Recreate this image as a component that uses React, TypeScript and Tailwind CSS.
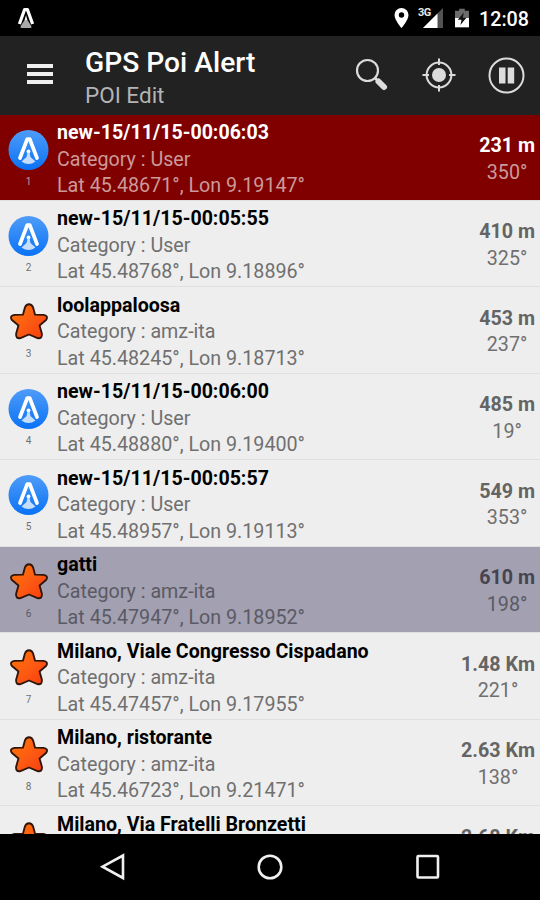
import React from "react";

type Poi = {
  name: string;
  category: string;
  lat?: string;
  lon?: string;
  distance: string;
  bearing?: string;
  state?: "nearest" | "selected";
};

const pois: Poi[] = [
  { name: "new-15/11/15-00:06:03", category: "User", lat: "45.48671", lon: "9.19147", distance: "231 m", bearing: "350°", state: "nearest" },
  { name: "new-15/11/15-00:05:55", category: "User", lat: "45.48768", lon: "9.18896", distance: "410 m", bearing: "325°" },
  { name: "loolappaloosa", category: "amz-ita", lat: "45.48245", lon: "9.18713", distance: "453 m", bearing: "237°" },
  { name: "new-15/11/15-00:06:00", category: "User", lat: "45.48880", lon: "9.19400", distance: "485 m", bearing: "19°" },
  { name: "new-15/11/15-00:05:57", category: "User", lat: "45.48957", lon: "9.19113", distance: "549 m", bearing: "353°" },
  { name: "gatti", category: "amz-ita", lat: "45.47947", lon: "9.18952", distance: "610 m", bearing: "198°", state: "selected" },
  { name: "Milano, Viale Congresso Cispadano", category: "amz-ita", lat: "45.47457", lon: "9.17955", distance: "1.48 Km", bearing: "221°" },
  { name: "Milano, ristorante", category: "amz-ita", lat: "45.46723", lon: "9.21471", distance: "2.63 Km", bearing: "138°" },
  { name: "Milano, Via Fratelli Bronzetti", category: "amz-ita", distance: "2.68 Km" },
];

export default function App() {
  return (
    <div className="flex h-[900px] w-[540px] flex-col overflow-hidden bg-black font-['Roboto','Noto_Sans',sans-serif]">
      <StatusBar />
      <Toolbar />
      <main className="min-h-0 flex-1 overflow-hidden bg-[#eeeeee]">
        {pois.map((poi, index) => (
          <PoiRow key={index} poi={poi} position={index + 1} />
        ))}
      </main>
      <NavigationBar />
    </div>
  );
}

function StatusBar() {
  return (
    <div className="flex h-9 shrink-0 items-center justify-between pr-[11px] pl-[17px]">
      <svg width="18" height="22" viewBox="0 0 18 22">
        <path d="M2.400 17 7.600 2.500h2.800L15.600 17" fill="none" stroke="#fff" strokeWidth="3.200" strokeLinejoin="round" />
        <path d="M9 10 11 14l3.300 5v2H3.700v-2L7 14z" fill="#a9a9a9" />
        <path d="m9 8 1.200 5H7.800z" fill="#fff" />
      </svg>
      <div className="flex items-center">
        <svg width="15" height="22" viewBox="0 0 15 22" className="mr-[9px]">
          <path
            fillRule="evenodd"
            d="M7.500 1A7 7 0 0 0 .5 8c0 5 7 13 7 13s7-8 7-13a7 7 0 0 0-7-7m0 4.300a2.700 2.700 0 1 1 0 5.400 2.700 2.700 0 0 1 0-5.400"
            fill="#fff"
          />
        </svg>
        <div className="relative mr-[11px] h-[22px] w-[26px]">
          <span className="absolute top-0 left-0 text-[11px] leading-[12px] font-bold tracking-[-0.7px] text-[#e8e8e8]">3G</span>
          <svg width="26" height="22" viewBox="0 0 26 22">
            <path d="M25 1v20H5z" fill="#525252" />
            <path d="M19.500 6.500V21H5z" fill="#fff" />
          </svg>
        </div>
        <svg width="14" height="22" viewBox="0 0 15 22" className="mr-[10px]">
          <path d="M4.500 1h6v2.200H15V11H0V3.200h4.500z" fill="#6c6c6c" />
          <path d="M0 11h15v10H0z" fill="#fff" />
          <path d="M9.500 5 3 12.800h4L5.800 18.500l6.400-7.700H8.300z" fill="#111" />
        </svg>
        <span className="mt-[3px] text-[19.700px] leading-[24px] font-medium text-white">12:08</span>
      </div>
    </div>
  );
}

function Toolbar() {
  return (
    <header className="flex h-[78.500px] shrink-0 items-center bg-[#222222] pr-[15px] pl-[26.500px]">
      <div className="mb-[2px] flex flex-col gap-[4px]">
        <div className="h-[4px] w-[26.500px] bg-[#f0f0f0]" />
        <div className="h-[4px] w-[26.500px] bg-[#f0f0f0]" />
        <div className="h-[4px] w-[26.500px] bg-[#f0f0f0]" />
      </div>
      <div className="ml-8 flex-1 pt-[7px]">
        <h1 className="text-[28.200px] leading-[33px] font-medium whitespace-nowrap text-white">GPS Poi Alert</h1>
        <p className="text-[22.500px] leading-[32px] text-[#b4b4b4]">POI Edit</p>
      </div>
      <svg width="34" height="34" viewBox="0 0 34 34" fill="none" className="mr-[33px]">
        <circle cx="12.500" cy="12.500" r="10.500" stroke="#dcdcdc" strokeWidth="2.200" />
        <path d="m19.500 19.500 3 3" stroke="#dcdcdc" strokeWidth="2.500" />
        <path d="m23.500 23.500 5.500 5.500" stroke="#dcdcdc" strokeWidth="6" strokeLinecap="round" />
      </svg>
      <svg width="34" height="34" viewBox="0 0 34 34" fill="none" className="mr-[32px]">
        <circle cx="17" cy="17" r="12.400" stroke="#dcdcdc" strokeWidth="2" />
        <circle cx="17" cy="17" r="7" fill="#dcdcdc" />
        <path d="M17 .5V7M17 27v6.500M.5 17H7M27 17h6.500" stroke="#dcdcdc" strokeWidth="2" />
      </svg>
      <svg width="37" height="37" viewBox="0 0 37 37" fill="none">
        <circle cx="18.500" cy="18.500" r="17" stroke="#dcdcdc" strokeWidth="2" />
        <path d="M11 10.500h6.500v16H11zM19.700 10.500h6.500v16h-6.500z" fill="#dcdcdc" />
      </svg>
    </header>
  );
}

function PoiRow({ poi, position }: { poi: Poi; position: number }) {
  const nearest = poi.state === "nearest";
  const selected = poi.state === "selected";
  const background = nearest ? "bg-[#800000]" : selected ? "bg-[#a2a0b1]" : "bg-[#eeeeee]";
  const secondary = nearest ? "text-[#cc9a9a]" : selected ? "text-[#5b5a64]" : "text-[#707070]";
  const distance = nearest ? "text-white" : selected ? "text-[#45444f]" : "text-[#646464]";

  return (
    <div className={`flex h-[86.450px] items-start border-b border-[#dfdfdf] pr-[5px] ${background}`}>
      <div className="flex w-[57px] shrink-0 flex-col items-center pt-[14px]">
        {poi.category === "User" ? <PoiBadge /> : <PoiStar />}
        {poi.lat && <span className={`mt-[5px] text-[10px] leading-[12px] ${secondary}`}>{position}</span>}
      </div>
      <div className="min-w-0 flex-1 pt-[5.500px] text-[19.700px] leading-[26.500px] whitespace-nowrap">
        <p className={`text-[19.600px] font-bold ${nearest ? "text-white" : "text-black"}`}>{poi.name}</p>
        {poi.lat && (
          <>
            <p className={secondary}>Category : {poi.category}</p>
            <p className={secondary}>
              Lat {poi.lat}°, Lon {poi.lon}°
            </p>
          </>
        )}
      </div>
      <div className="flex flex-col items-center pt-[18.500px] text-[19.700px] leading-[26.500px]">
        <span className={`font-bold ${distance}`}>{poi.distance}</span>
        <span className={secondary}>{poi.bearing}</span>
      </div>
    </div>
  );
}

function PoiBadge() {
  return (
    <svg width="42" height="42" viewBox="0 0 42 42">
      <defs>
        <linearGradient id="badge" x1="0" y1="0" x2="0" y2="1">
          <stop offset="0" stopColor="#4f9cf8" />
          <stop offset="1" stopColor="#0a72f5" />
        </linearGradient>
      </defs>
      <circle cx="20.500" cy="21" r="20" fill="url(#badge)" />
      <path d="M12 29 19.300 10h2.400L29 29" fill="none" stroke="#fff" strokeWidth="3.700" strokeLinejoin="round" strokeLinecap="round" />
      <circle cx="20.500" cy="22.500" r="1.900" fill="#fff" />
      <path d="M19.500 23.500h2l1 4.500 5 4.500q-7 5-14 0l5-4.500z" fill="#c4defc" />
    </svg>
  );
}

function PoiStar() {
  return (
    <svg width="42" height="42" viewBox="-0.500 0 43 43">
      <defs>
        <linearGradient id="star" x1="0" y1="0" x2="1" y2="1">
          <stop offset="0" stopColor="#ff7800" />
          <stop offset="0.500" stopColor="#fd5c13" />
          <stop offset="1" stopColor="#f83a10" />
        </linearGradient>
      </defs>
      <path
        d="M21 3.300q3 0 4.200 3.400l2 7.300 8.500.2q5.500 1 3 5L31.800 25l2.400 8.500q.5 5.500-4.500 4.500L21 34.300l-8.700 3.700q-5 1-4.500-4.500l2.400-8.500L3.300 19.200q-2.500-4 3-5l8.500-.2 2-7.300q1.200-3.400 4.200-3.400z"
        fill="url(#star)"
        stroke="#301509"
        strokeWidth="1.900"
        strokeLinejoin="round"
      />
    </svg>
  );
}

function NavigationBar() {
  return (
    <nav className="flex h-[66px] shrink-0 items-center justify-between bg-black px-[98.500px]">
      <svg width="28" height="30" viewBox="0 0 28 30" fill="none" stroke="#f0f0f0" strokeWidth="2.600">
        <path d="M24 3.500v22.500L3.500 14.700z" />
      </svg>
      <svg width="30" height="30" viewBox="0 0 30 30" fill="none" stroke="#f0f0f0" strokeWidth="2.600">
        <circle cx="15" cy="15" r="11.300" />
      </svg>
      <svg width="28" height="30" viewBox="0 0 28 30" fill="none" stroke="#f0f0f0" strokeWidth="2.600">
        <rect x="3.500" y="4" width="20.500" height="21.500" rx="1" />
      </svg>
    </nav>
  );
}
